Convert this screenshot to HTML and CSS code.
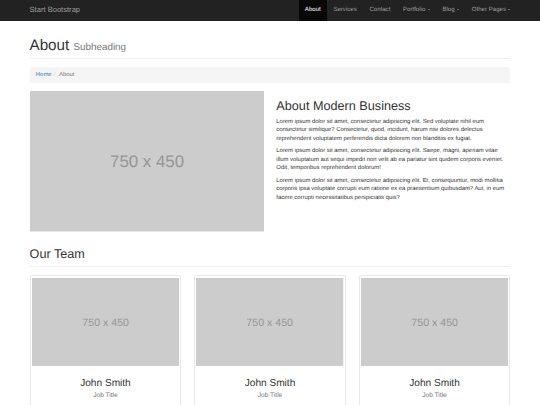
FILE: index.html
```html
<!DOCTYPE html>
<html lang="en">
<head>
<meta charset="utf-8">
<title>About - Modern Business</title>
<link rel="stylesheet" href="styles.css">
</head>
<body>
<nav class="navbar">
  <div class="container navbar-inner">
    <a class="brand" href="#">Start Bootstrap</a>
    <ul class="nav">
      <li><a class="nav-link active" href="#">About</a></li>
      <li><a class="nav-link" href="#">Services</a></li>
      <li><a class="nav-link" href="#">Contact</a></li>
      <li><a class="nav-link" href="#">Portfolio <span class="caret"></span></a></li>
      <li><a class="nav-link" href="#">Blog <span class="caret"></span></a></li>
      <li><a class="nav-link" href="#">Other Pages <span class="caret"></span></a></li>
    </ul>
  </div>
</nav>

<main class="container">
  <h1 class="page-header">About <small class="subhead">Subheading</small></h1>
  <ol class="breadcrumb">
    <li class="crumb"><a class="crumb-link" href="#">Home</a></li>
    <li class="crumb crumb-active">About</li>
  </ol>

  <section class="about-row">
    <div class="about-media">
      <svg class="placeholder" viewBox="0 0 750 450" preserveAspectRatio="none">
        <rect width="750" height="450" fill="#cccccc"/>
        <text x="375" y="244" text-anchor="middle" font-family="Liberation Sans, Arial, sans-serif" font-size="54" fill="#969696">750 x 450</text>
      </svg>
    </div>
    <div class="about-text">
      <h2 class="section-title">About Modern Business</h2>
      <p class="para">Lorem ipsum dolor sit amet, consectetur adipisicing elit. Sed voluptate nihil eum consectetur similique? Consectetur, quod, incidunt, harum nisi dolores delectus reprehenderit voluptatem perferendis dicta dolorem non blanditiis ex fugiat.</p>
      <p class="para">Lorem ipsum dolor sit amet, consectetur adipisicing elit. Saepe, magni, aperiam vitae illum voluptatum aut sequi impedit non velit ab ea pariatur sint quidem corporis eveniet. Odit, temporibus reprehenderit dolorum!</p>
      <p class="para">Lorem ipsum dolor sit amet, consectetur adipisicing elit. Et, consequuntur, modi mollitia corporis ipsa voluptate corrupti eum ratione ex ea praesentium quibusdam? Aut, in eum facere corrupti necessitatibus perspiciatis quis?</p>
    </div>
  </section>

  <h2 class="page-header team-header">Our Team</h2>

  <section class="team">
    <div class="thumb">
      <svg class="placeholder" viewBox="0 0 750 450" preserveAspectRatio="none">
        <rect width="750" height="450" fill="#cccccc"/>
        <text x="375" y="244" text-anchor="middle" font-family="Liberation Sans, Arial, sans-serif" font-size="54" fill="#969696">750 x 450</text>
      </svg>
      <div class="caption">
        <h3 class="member">John Smith<br><small class="job">Job Title</small></h3>
      </div>
    </div>
    <div class="thumb">
      <svg class="placeholder" viewBox="0 0 750 450" preserveAspectRatio="none">
        <rect width="750" height="450" fill="#cccccc"/>
        <text x="375" y="244" text-anchor="middle" font-family="Liberation Sans, Arial, sans-serif" font-size="54" fill="#969696">750 x 450</text>
      </svg>
      <div class="caption">
        <h3 class="member">John Smith<br><small class="job">Job Title</small></h3>
      </div>
    </div>
    <div class="thumb">
      <svg class="placeholder" viewBox="0 0 750 450" preserveAspectRatio="none">
        <rect width="750" height="450" fill="#cccccc"/>
        <text x="375" y="244" text-anchor="middle" font-family="Liberation Sans, Arial, sans-serif" font-size="54" fill="#969696">750 x 450</text>
      </svg>
      <div class="caption">
        <h3 class="member">John Smith<br><small class="job">Job Title</small></h3>
      </div>
    </div>
  </section>
</main>
</body>
</html>
```

FILE: styles.css
```css
html {
  overflow: hidden;
}

body {
  margin: 0;
  background: #fff;
  color: #333;
  font-family: "Liberation Sans", Arial, Helvetica, sans-serif;
  font-size: 5.906px;
  line-height: 8.44px;
  text-rendering: geometricPrecision;
}

a {
  text-decoration: none;
}

.container {
  width: 480.94px;
  margin: 0 auto;
}

/* Navbar */
.navbar {
  background: #222;
  height: 21.09px;
}

.navbar-inner {
  display: flex;
  justify-content: space-between;
  align-items: stretch;
  height: 21.09px;
}

.brand {
  color: #9d9d9d;
  font-size: 7.59px;
  line-height: 8.44px;
  padding: 6.33px 6.33px;
  margin-left: -6.33px;
}

.nav {
  display: flex;
  list-style: none;
  margin: 0 -6.33px 0 0;
  padding: 0;
}

.nav-link {
  display: block;
  color: #9d9d9d;
  font-size: 6.08px;
  line-height: 8.44px;
  padding: 6.33px 6.33px;
  height: 8.44px;
  white-space: nowrap;
}

.nav-link.active {
  background: #080808;
  color: #fff;
}

.caret {
  display: inline-block;
  width: 0;
  height: 0;
  margin-left: 0.84px;
  vertical-align: middle;
  border-top: 1.69px solid #9d9d9d;
  border-left: 1.69px solid transparent;
  border-right: 1.69px solid transparent;
}

/* Headers */
.page-header {
  font-size: 15.19px;
  line-height: 1.1;
  font-weight: 400;
  margin: 16.875px 0 8.44px;
  padding-bottom: 3.4px;
  border-bottom: 1px solid #f2f2f2;
}

.subhead {
  font-size: 65%;
  color: #777;
  font-weight: 400;
}

.team-header {
  font-size: 12.66px;
}

/* Breadcrumb */
.breadcrumb {
  list-style: none;
  margin: 0 0 8.44px;
  padding: 3.375px 6.33px;
  background: #f5f5f5;
  border-radius: 1.69px;
  display: flex;
}

.crumb-link {
  color: #337ab7;
}

.crumb-active {
  color: #777;
}

.crumb + .crumb::before {
  content: "/\00a0";
  padding: 0 2.11px;
  color: #ccc;
}

/* About row */
.about-row {
  display: grid;
  grid-template-columns: 1fr 1fr;
  column-gap: 12.66px;
}

.placeholder {
  display: block;
  width: 100%;
  height: auto;
  aspect-ratio: 750 / 450;
}

.section-title {
  font-size: 12.66px;
  line-height: 1.1;
  font-weight: 400;
  margin: 8.44px 0 4.22px;
}

.para {
  margin: 0 0 4.22px;
}

/* Team */
.team {
  display: grid;
  grid-template-columns: repeat(3, 1fr);
  column-gap: 12.66px;
}

.thumb {
  border: 1px solid #e8e8e8;
  border-radius: 1.69px;
  padding: 1.3px;
  text-align: center;
  margin-bottom: 8.44px;
}

.caption {
  padding: 3.8px;
}

.member {
  font-size: 10.125px;
  line-height: 1.1;
  font-weight: 400;
  margin: 8.44px 0 4.22px;
}

.job {
  font-size: 65%;
  color: #777;
  font-weight: 400;
}
```
